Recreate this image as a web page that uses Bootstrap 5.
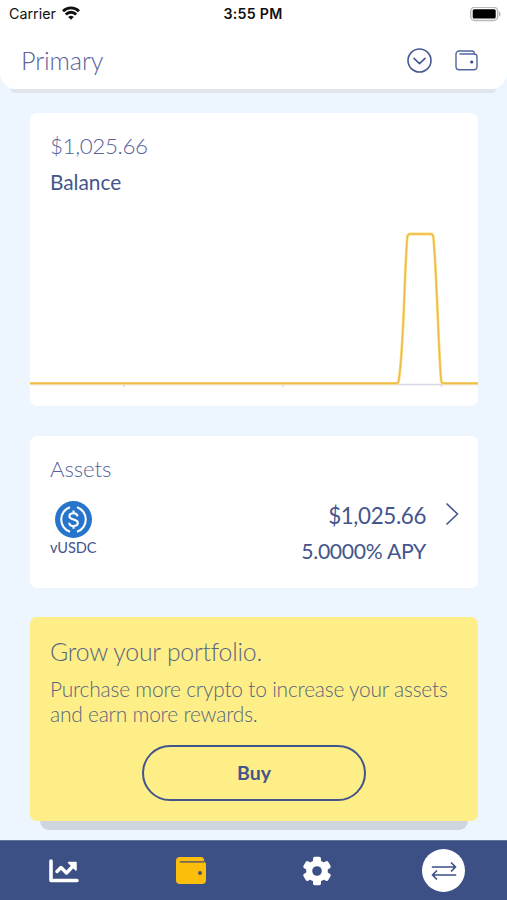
<!DOCTYPE html>
<html lang="en">
<head>
<meta charset="utf-8">
<meta name="viewport" content="width=device-width, initial-scale=1">
<title>Primary wallet</title>
<link href="https://cdn.jsdelivr.net/npm/bootstrap@5.3.0/dist/css/bootstrap.min.css" rel="stylesheet">
<style>
:root { --ink: #43558c; }
body { font-family: Lato, "Liberation Sans", sans-serif; color: var(--ink); background: #edf5fe; height: 900px; overflow: hidden; }
svg { display: block; flex: none; }
.top-panel { height: 89px; border-radius: 0 0 16px 16px; z-index: 1; }
.top-shade { height: 4px; margin: 0 11px; background: #e0e4ed; border-radius: 0 0 4px 4px; }
.status { height: 28px; padding: 0 6px 0 9px; font-family: Inter, "Liberation Sans", sans-serif; color: #111; font-size: 14.3px; line-height: 28px; }
.status-left { gap: 6px; }
.status-time { font-weight: 600; font-size: 14.2px; letter-spacing: .25px; margin-right: 4px; }
.wifi { margin-top: -2px; }
.title-row { height: 61px; padding: 0 29px 0 21px; }
.title-icon { margin-top: 3px; }
.icon-down { margin-right: 23.500px; }
.thin { font-weight: 300; color: #58639a; }
.title-text { font-size: 25.3px; line-height: 30px; margin-top: 3px; letter-spacing: -.12px; }
.panels { padding: 20px 29px 0 30px; }
.panel { border-radius: 7px; }
.panel-balance { height: 293px; margin-bottom: 30px; padding-top: 20px; }
.balance-text { padding-left: 20px; }
.panel-assets { height: 152px; margin-bottom: 29px; padding: 20px 18px 0 20px; }
.panel-grow { height: 204px; padding: 20px 20px 0; background: #feee88; z-index: 1; }
.grow-shade { height: 9px; margin: 0 10px; background: #d0d5dd; border-radius: 0 0 9px 9px; }
.amount { font-size: 22.4px; line-height: 26px; letter-spacing: -.38px; }
.label { font-size: 20.9px; line-height: 26px; margin-top: 10px; letter-spacing: -.05px; }
.assets-title { font-size: 22.2px; line-height: 26px; letter-spacing: -.1px; }
.coin { width: 47px; margin-top: 19px; }
.coin-name { font-size: 14.6px; line-height: 16px; letter-spacing: -.1px; margin-top: 2px; white-space: nowrap; }
.asset-values { margin-top: 21px; }
.apy { font-size: 21.2px; line-height: 26px; margin-top: 9px; letter-spacing: -.3px; }
.chevron { margin: 20px 0 0 18px; }
.grow-title { font-size: 24.8px; line-height: 30px; color: #59657f; letter-spacing: -.2px; }
.grow-text { font-size: 20.9px; line-height: 25px; margin-top: 9px; color: #59657f; white-space: nowrap; letter-spacing: -.2px; }
.buy { width: 224px; height: 56px; border: 2px solid var(--ink); color: var(--ink); font-weight: 700; font-size: 19.5px; margin-top: 19px; }
.tabs { height: 60px; background: #3c5085; border-top: 1px solid #65759f; margin-top: 10px; padding-left: 1px; }
.swap { width: 43px; height: 43px; }
</style>
<script src="https://cdn.jsdelivr.net/npm/bootstrap@5.3.0/dist/js/bootstrap.bundle.min.js"></script>
</head>
<body>
<header class="top-panel bg-white position-relative">
  <div class="status row g-0 align-items-center">
    <div class="col status-left d-flex align-items-center"><span>Carrier</span>
      <svg class="wifi" width="18" height="14" viewBox="0 0 18 14" fill="none" stroke="#111" stroke-width="2.900"><path d="M1 5.200a11.300 11.300 0 0 1 16 0M3.800 8.500a7.300 7.300 0 0 1 10.400 0"/><path d="M9 13.800 6.200 11a4 4 0 0 1 5.600 0z" fill="#111" stroke="none"/></svg>
    </div>
    <div class="col-auto status-time">3:55 PM</div>
    <div class="col d-flex justify-content-end">
      <svg width="31" height="15" viewBox="0 0 31 15"><rect x=".7" y=".2" width="27" height="13.300" rx="4" fill="#fff" stroke="#b8b8b8" stroke-width="1.400"/><rect x="2.700" y="2.200" width="23" height="9.300" rx="1.500" fill="#000"/><path d="M29 4.500v5c2-.8 2-4.200 0-5z" fill="#b0b0b0"/></svg>
    </div>
  </div>
  <div class="title-row d-flex align-items-center">
    <div class="title-text thin me-auto">Primary</div>
    <svg class="title-icon icon-down" width="25" height="25" viewBox="0 0 25 25" fill="none" stroke="#465a92" stroke-width="1.600" stroke-linecap="round" stroke-linejoin="round"><circle cx="12.500" cy="12.500" r="11.500"/><path d="m7 10.300 5.500 5.300 5.500-5.300"/></svg>
    <svg class="title-icon" width="23" height="21" viewBox="0 0 23 21" fill="none" stroke="#5266a0" stroke-width="1.400"><path d="M19.500 4V3.500A2.500 2.500 0 0 0 17.500 1H4A3 3 0 0 0 1 4v12.500A3.200 3.200 0 0 0 4.200 19.700h14.600a3.200 3.200 0 0 0 3.200-3.200V7a3 3 0 0 0-3-3H4.500"/><circle cx="16.700" cy="12" r="1.600" fill="#38477f" stroke="none"/></svg>
  </div>
</header>
<div class="top-shade"></div>
<main class="panels">
  <section class="panel panel-balance bg-white overflow-hidden">
    <div class="balance-text">
      <div class="amount thin">$1,025.66</div>
      <div class="label">Balance</div>
    </div>
    <svg class="mt-4" width="448" height="180" viewBox="30 219 448 180" fill="none"><path d="M30 384.500H478M124 384v3M283 384v3M441.500 384v3" stroke="#d9d9e5" stroke-width="1.500"/><path d="M30 383.300H396.500Q398.500 383.300 399 379C404 344 404 280 407.200 238Q407.500 234 410 234H431Q433 234 433.500 238C437 280 438.500 350 441 379Q441.500 383.300 443 383.300H478" stroke="#fbdc80" stroke-width="2.800"/><path d="M30 383.300H396.500Q398.500 383.300 399 379C404 344 404 280 407.200 238Q407.500 234 410 234H431Q433 234 433.500 238C437 280 438.500 350 441 379Q441.500 383.300 443 383.300H478" stroke="#edbd4b" stroke-width="1.500"/></svg>
  </section>
  <section class="panel panel-assets bg-white">
    <div class="assets-title thin">Assets</div>
    <div class="d-flex">
      <div class="coin">
        <svg class="mx-auto" width="37" height="37" viewBox="0 0 37 37" fill="none" stroke="#fff" stroke-width="2.100"><circle cx="18.500" cy="18.500" r="18.500" fill="#2775ca" stroke="none"/><path d="M15 6.200a13 13 0 0 0 0 24.600M22 6.200a13 13 0 0 1 0 24.600"/><path d="M22.500 15.400c-.2-2.100-1.700-3.200-4-3.200-2.600 0-4.100 1.100-4.100 3 0 4.500 8.400 2 8.400 6.500 0 2.100-1.700 3.300-4.300 3.300s-4.200-1.200-4.300-3.300M18.500 9.500v2.700M18.500 25v2.700"/></svg>
        <div class="coin-name">vUSDC</div>
      </div>
      <div class="asset-values ms-auto text-end">
        <div class="amount">$1,025.66</div>
        <div class="apy">5.0000% APY</div>
      </div>
      <svg class="chevron" width="16" height="24" viewBox="0 0 16 24" fill="none" stroke="#465890" stroke-width="1.700" stroke-linecap="round" stroke-linejoin="round"><path d="m3 2 10.500 10L3 22"/></svg>
    </div>
  </section>
  <section class="panel panel-grow position-relative">
    <div class="grow-title fw-light">Grow your portfolio.</div>
    <div class="grow-text fw-light">Purchase more crypto to increase your assets<br>and earn more rewards.</div>
    <button class="btn buy rounded-pill d-block mx-auto p-0">Buy</button>
  </section>
  <div class="grow-shade"></div>
</main>
<nav class="tabs row g-0 align-items-center">
  <div class="col d-flex justify-content-center"><svg width="30" height="24" viewBox="0 0 30 24" fill="none" stroke="#fff" stroke-width="3.600" stroke-linecap="round" stroke-linejoin="round"><path d="M2 2v19.500h26"/><path d="m8 12.500 4-4 5.500 5.500 7-7.500" stroke-width="3.500"/><path d="M19.500 3.500H27V11z" fill="#fff" stroke-width="1.500"/></svg></div>
  <div class="col d-flex justify-content-center"><svg width="30" height="27" viewBox="0 0 30 27"><path d="M4 0h21a3 3 0 0 1 3 3v1.500h-1a3 3 0 0 1 3 3V23a4 4 0 0 1-4 4H4a4 4 0 0 1-4-4V4a4 4 0 0 1 4-4z" fill="#fdbe0b"/><path d="M4.500 4.800H28" stroke="#766a52" stroke-width="1.700" stroke-linecap="round"/><circle cx="24" cy="16" r="2" fill="#4d526c"/></svg></div>
  <div class="col d-flex justify-content-center"><svg width="30" height="30" viewBox="0 0 30 30"><g fill="#fff"><circle cx="15" cy="15" r="10.800"/><rect x="11" y=".7" width="8" height="28.600" rx="1.800"/><rect x="11" y=".7" width="8" height="28.600" rx="1.800" transform="rotate(60 15 15)"/><rect x="11" y=".7" width="8" height="28.600" rx="1.800" transform="rotate(120 15 15)"/></g><circle cx="15" cy="15" r="4.800" fill="#3c5085"/></svg></div>
  <div class="col d-flex justify-content-center"><div class="swap rounded-circle bg-white d-flex align-items-center justify-content-center"><svg width="26" height="18" viewBox="0 0 26 18" fill="none" stroke="#3c5085" stroke-width="1.700" stroke-linecap="round" stroke-linejoin="round"><path d="M1.500 5h23M20.500 1l4 4-4 4M24.500 13h-23M5.500 9l-4 4 4 4"/></svg></div></div>
</nav>
</body>
</html>
